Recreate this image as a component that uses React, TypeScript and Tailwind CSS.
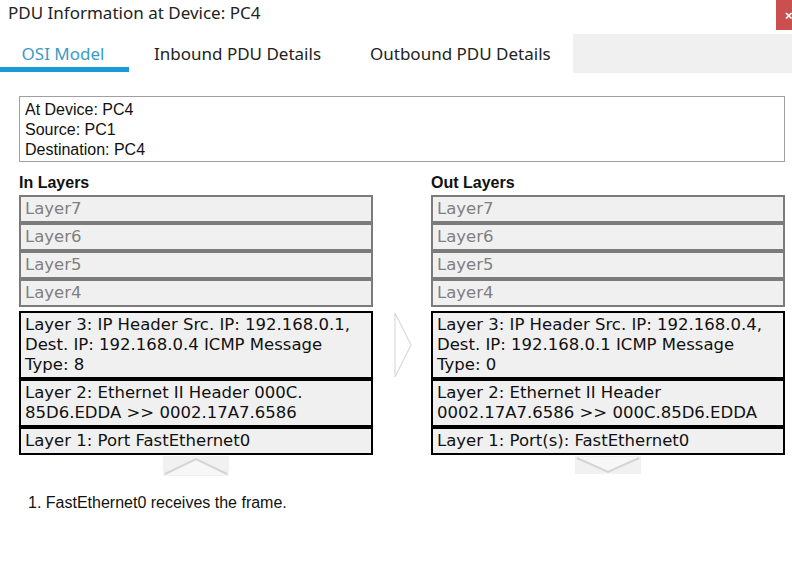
import React from "react";

const gray = ["Layer7", "Layer6", "Layer5", "Layer4"];

interface ColProps {
  title: string;
  layers: string[][];
  dir: "up" | "down";
}

function LayerBox({ lines, active }: { lines: string[]; active: boolean }) {
  return (
    <div
      className={`border-2 bg-[#f0f0f0] px-[4px] py-[2px] text-[16.5px] leading-[20px] ${
        active ? "border-black text-[#111]" : "border-[#7b7b7b] text-[#808080]"
      }`}
      style={{ fontFamily: '"DejaVu Sans", Verdana, sans-serif' }}
    >
      {lines.map((l, i) => (
        <div key={i} className="whitespace-nowrap">{l}</div>
      ))}
    </div>
  );
}

function Column({ title, layers, dir }: ColProps) {
  return (
    <div className="flex w-[354px] flex-col">
      <div className="h-[20px] text-[16px] font-bold leading-[16px] text-[#111]">{title}</div>
      {gray.map((g) => (
        <LayerBox key={g} lines={[g]} active={false} />
      ))}
      <div className="h-[4px]" />
      {layers.map((l, i) => (
        <LayerBox key={i} lines={l} active />
      ))}
      <div className="mx-auto mt-[1px]">
        {dir === "up" ? (
          <svg width="66" height="20" viewBox="0 0 66 20">
            <rect width="66" height="20" fill="#f1f1f1" />
            <polygon points="2,19 33,3 64,19" fill="#f7f7f7" />
            <polyline points="2,18 33,3 64,18" fill="none" stroke="#d4d4d4" strokeWidth="2" />
          </svg>
        ) : (
          <svg width="66" height="18" viewBox="0 0 66 18">
            <rect width="66" height="18" fill="#f1f1f1" />
            <polygon points="2,1 33,16 64,1" fill="#f7f7f7" />
            <polyline points="2,2 33,16 64,2" fill="none" stroke="#d4d4d4" strokeWidth="2" />
          </svg>
        )}
      </div>
    </div>
  );
}

export default function App() {
  return (
    <div
      className="relative h-[583px] w-[792px] overflow-hidden bg-white"
      style={{ fontFamily: '"Liberation Sans", Arial, sans-serif' }}
    >
      {/* Title bar */}
      <div className="flex h-[34px] items-start justify-between">
        <div
          className="pl-[8px] pt-[1px] text-[17px] leading-[23px] text-[#222]"
          style={{ fontFamily: '"Noto Sans", "Open Sans", sans-serif' }}
        >
          PDU Information at Device: PC4
        </div>
        <div className="flex h-[30px] w-[16px] items-center overflow-hidden bg-[#c9504f]">
          <span className="pl-[9px] text-[13px] font-bold leading-none text-white">×</span>
        </div>
      </div>

      {/* Tabs */}
      <div
        className="flex h-[39px] text-[17px] text-[#222]"
        style={{ fontFamily: '"Noto Sans", "Open Sans", sans-serif' }}
      >
        <div className="flex w-[129px] flex-col">
          <div className="flex flex-1 items-center justify-center pr-[3px] pt-[7px] text-[#3b9bc6]">OSI Model</div>
          <div className="mb-[1px] h-[7px] bg-[#1a9ad6]" />
        </div>
        <div className="flex w-[216px] items-center pl-[25px]">Inbound PDU Details</div>
        <div className="flex w-[228px] items-center pl-[25px]">Outbound PDU Details</div>
        <div className="flex-1 bg-[#f0f0f0]" />
      </div>

      <div className="pl-[19px] pr-[7px] pt-[23px]">
        {/* Info box */}
        <div className="h-[66px] border border-[#a0a0a0] px-[5px] pt-[3px] text-[16px] leading-[20px] text-[#111]">
          <div>At Device: PC4</div>
          <div>Source: PC1</div>
          <div>Destination: PC4</div>
        </div>

        <div className="mt-[13px] flex">
          <Column
            title="In Layers"
            dir="up"
            layers={[
              ["Layer 3: IP Header Src. IP: 192.168.0.1,", "Dest. IP: 192.168.0.4 ICMP Message", "Type: 8"],
              ["Layer 2: Ethernet II Header 000C.", "85D6.EDDA >> 0002.17A7.6586"],
              ["Layer 1: Port FastEthernet0"],
            ]}
          />
          <div className="w-[58px] pl-[20px] pt-[136px]">
            <svg width="20" height="68" viewBox="0 0 20 68">
              <polyline points="2,2 18,34 2,66 2,2" fill="none" stroke="#dadada" strokeWidth="1.2" />
            </svg>
          </div>
          <Column
            title="Out Layers"
            dir="down"
            layers={[
              ["Layer 3: IP Header Src. IP: 192.168.0.4,", "Dest. IP: 192.168.0.1 ICMP Message", "Type: 0"],
              ["Layer 2: Ethernet II Header", "0002.17A7.6586 >> 000C.85D6.EDDA"],
              ["Layer 1: Port(s): FastEthernet0"],
            ]}
          />
        </div>

        <div className="pl-[9px] pt-[18px] text-[16px] leading-[18px] text-[#111]">
          1. FastEthernet0 receives the frame.
        </div>
      </div>
    </div>
  );
}
